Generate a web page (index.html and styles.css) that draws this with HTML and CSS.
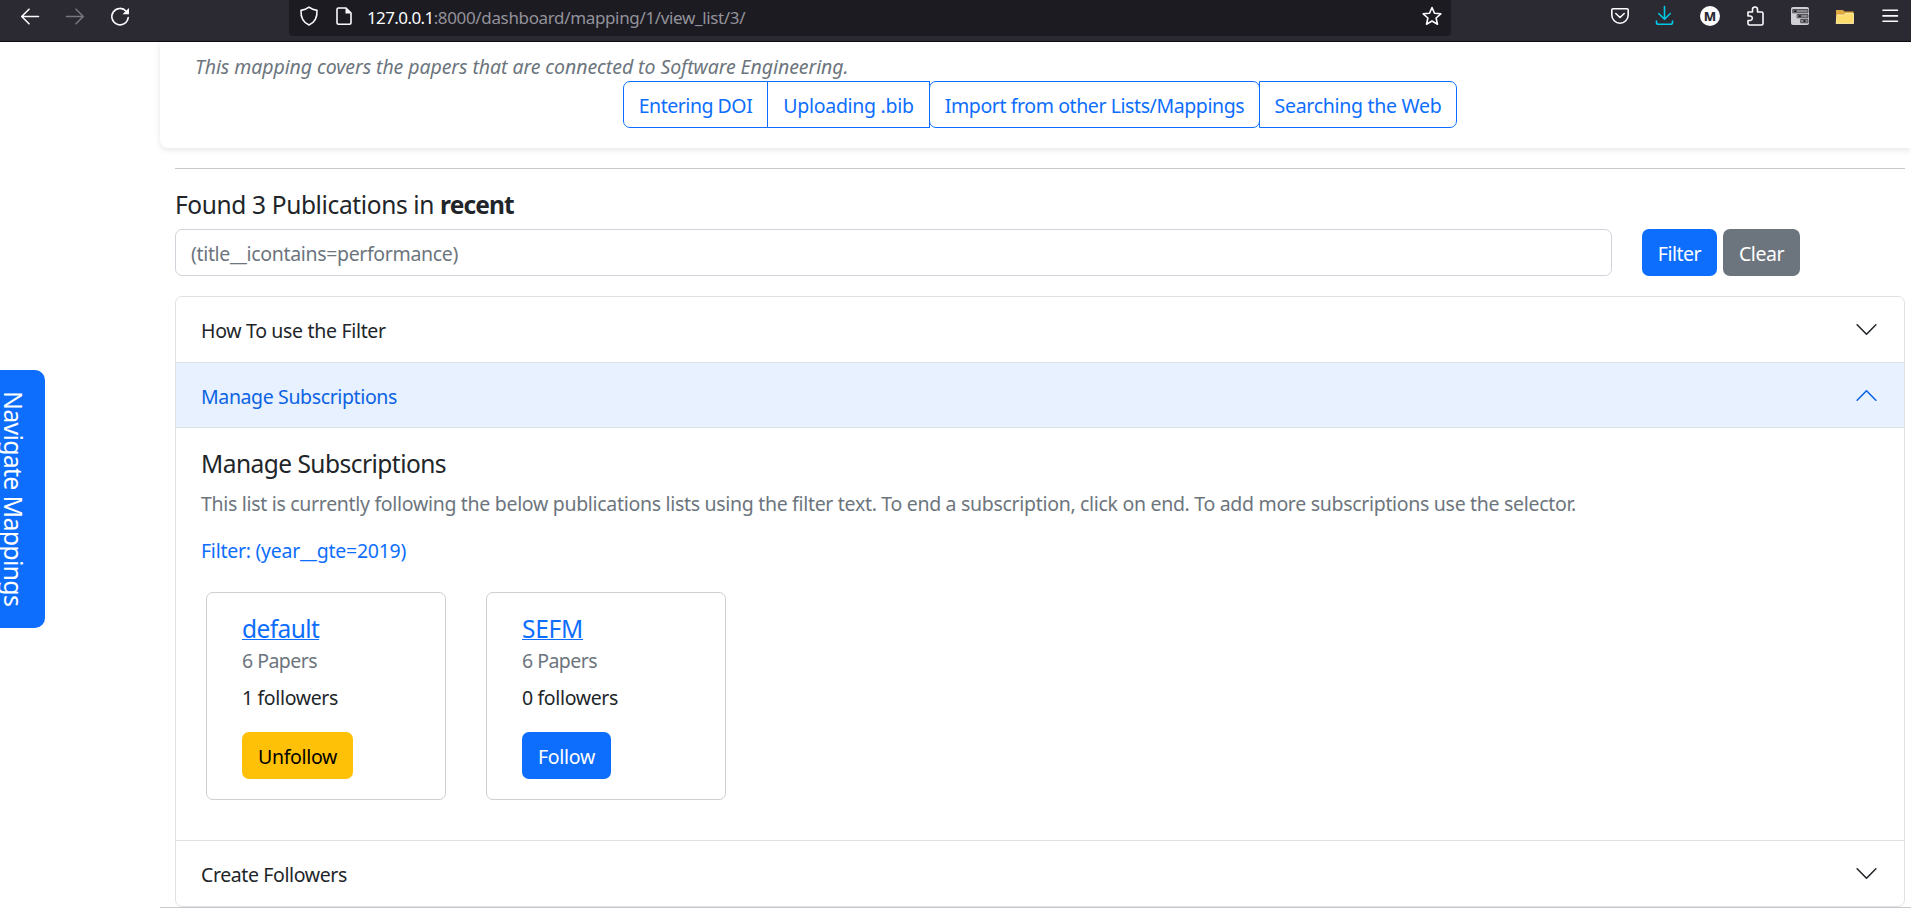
FILE: index.html
```html
<!DOCTYPE html>
<html lang="en">
<head>
<meta charset="utf-8">
<title>Mapping list</title>
<link rel="stylesheet" href="styles.css">
</head>
<body>
<header class="toolbar">
  <nav class="tools">
    <svg class="icon" viewBox="0 0 20 20"><path d="M18.500 10.500H2M9 3.200L1.700 10.500L9 17.800"/></svg>
    <svg class="icon dim" viewBox="0 0 20 20"><path d="M1.500 10.500H18M11 3.200L18.300 10.500L11 17.800"/></svg>
    <svg class="icon" viewBox="0 0 20 20"><path d="M16.200 5.200A8.200 8.200 0 1 0 18.200 11.500"/><path class="solid" d="M19 2V8.300H12.500Z"/></svg>
  </nav>
  <div class="url">
    <svg class="icon" viewBox="0 0 20 20"><path d="M10 1.200C12.300 3 15 4 18 4.400C18.300 11 16 16.500 10 19C4 16.500 1.700 11 2 4.400C5 4 7.700 3 10 1.200Z"/></svg>
    <svg class="icon" viewBox="0 0 20 20"><path d="M4.500 2H12L17 7V16.500Q17 18.200 15.300 18.200H4.700Q3 18.200 3 16.500V3.500Q3 2 4.500 2Z"/><path class="solid" d="M11.500 2L17 7.500H11.500Z"/></svg>
    <p class="address"><span class="host">127.0.0.1</span>:8000/dashboard/mapping/1/view_list/3/</p>
    <svg class="icon" viewBox="0 0 20 20"><path d="M10 1.500L12.500 7.200L18.800 7.800L14.100 12L15.500 18.200L10 15L4.500 18.200L5.900 12L1.200 7.800L7.500 7.200Z"/></svg>
  </div>
  <div class="tools extras">
    <svg class="icon" viewBox="0 0 20 20"><path d="M3 2.800H17Q18.200 2.800 18.200 4V9A8.200 8.200 0 0 1 1.800 9V4Q1.800 2.800 3 2.800Z"/><path d="M5.800 7.500L10 11.500L14.200 7.500"/></svg>
    <svg class="icon cyan" viewBox="0 0 20 20"><path d="M9.500 0.500V13M3.700 7.500L9.500 13.300L15.300 7.500"/><path d="M1.500 15V16.500Q1.500 18.300 3.500 18.300H15.500Q17.500 18.300 17.500 16.500V15"/></svg>
    <svg class="icon" viewBox="0 0 20 20"><circle class="disc" cx="10" cy="10" r="10"/><text class="letter" x="10" y="14.700">M</text></svg>
    <svg class="icon" viewBox="0 0 20 20"><path d="M3 6H7.500V3.500A2.500 2.500 0 0 1 12.500 3.500V6H16.500Q18 6 18 7.500V17.500Q18 19 16.500 19H4.500Q3 19 3 17.500V14.500H5.500A2.300 2.300 0 0 0 5.500 10H3Z"/></svg>
    <svg class="icon" viewBox="0 0 20 20"><rect class="pane" x="1" y="1" width="18" height="18" rx="2"/><path class="rows" d="M3 3.500H18V6.800H3ZM7.500 8.500H18V11.800H7.500ZM11 13.500H18V16.800H11Z"/><path class="marks" d="M4.500 5.100H6M9 10.100H10.500M14 15.100H15"/></svg>
    <svg class="icon" viewBox="0 0 20 20"><path class="folder-back" d="M1 4H8L9.500 5.500H18.500V17.500H1Z"/><path class="folder-front" d="M2.500 9H8.500L10.500 7.500H18.500V17.500H1.500Z"/></svg>
    <svg class="icon" viewBox="0 0 20 20"><path d="M3 4.200H17.500M3 9.900H17.500M3 15.300H17.500"/></svg>
  </div>
</header>

<main class="page">
  <section class="intro">
    <p class="summary">This mapping covers the papers that are connected to Software Engineering.</p>
    <div class="actions">
      <button class="btn outline first w-doi">Entering DOI</button>
      <button class="btn outline square w-bib">Uploading .bib</button>
      <button class="btn outline w-import">Import from other Lists/Mappings</button>
      <button class="btn outline last w-web">Searching the Web</button>
    </div>
  </section>

  <div class="content">
    <h5 class="title found">Found 3 Publications in <b>recent</b></h5>
    <form class="filter">
      <div class="field">(title__icontains=performance)</div>
      <button type="button" class="btn primary w-filter">Filter</button>
      <button type="button" class="btn secondary w-clear">Clear</button>
    </form>

    <div class="accordion">
      <div class="head">How To use the Filter<svg class="chevron" viewBox="0 0 16 16"><path d="M2 5L8 11L14 5"/></svg></div>
      <div class="head open">Manage Subscriptions<svg class="chevron" viewBox="0 0 16 16"><path d="M2 11L8 5L14 11"/></svg></div>
      <div class="body">
        <h5 class="title manage">Manage Subscriptions</h5>
        <p class="hint">This list is currently following the below publications lists using the filter text. To end a subscription, click on end. To add more subscriptions use the selector.</p>
        <p class="query">Filter: (year__gte=2019)</p>
        <div class="cards">
          <article class="card">
            <a class="name default">default</a>
            <p class="papers">6 Papers</p>
            <p class="followers">1 followers</p>
            <button class="btn warning w-unfollow">Unfollow</button>
          </article>
          <article class="card">
            <a class="name">SEFM</a>
            <p class="papers">6 Papers</p>
            <p class="followers">0 followers</p>
            <button class="btn primary w-follow">Follow</button>
          </article>
        </div>
      </div>
      <div class="head create">Create Followers<svg class="chevron" viewBox="0 0 16 16"><path d="M2 5L8 11L14 5"/></svg></div>
    </div>
  </div>
  <hr class="end">
</main>
<aside class="side-tab"><span>Navigate Mappings</span></aside>
</body>
</html>
```
FILE: styles.css
```css
* { box-sizing: border-box; }
body { margin: 0; height: 913px; overflow: hidden; background: #fff; color: #212529; font: 19.5px/30px "Noto Sans", "Open Sans", sans-serif; }
p, h5 { margin: 0; font-weight: 400; white-space: nowrap; }
.toolbar { display: flex; height: 42px; background: #2b2a33; border-bottom: 1px solid #0c0c0d; }
.tools { display: flex; gap: 25px; padding: 6px 0 0 20px; }
.icon { display: block; flex: none; width: 20px; height: 20px; overflow: visible; fill: none; stroke: #fbfbfe; stroke-width: 1.6; stroke-linejoin: round; stroke-linecap: round; }
.dim { stroke: #77767c; }
.cyan { stroke: #00c8e6; }
.solid { fill: #fbfbfe; stroke: none; }
.disc { fill: #fbfbfe; stroke: none; }
.letter { fill: #2b2a33; stroke: none; font-size: 13px; font-weight: 800; text-anchor: middle; }
.pane { fill: #d0d0d4; stroke: none; }
.rows { fill: #85858b; stroke: #3c3c42; stroke-width: .8; }
.marks { stroke: #1c1b22; stroke-width: 1.6; }
.folder-back { fill: #e0a840; stroke: none; }
.folder-front { fill: #fbdc6c; stroke: #fff0b8; stroke-width: .8; }
.url { display: flex; width: 1162px; height: 36px; margin-left: 159px; padding: 6px 9px 0 10px; gap: 15px; background: #1c1b22; border-radius: 0 0 4px 4px; }
.address { flex: 1; margin-left: -2px; font-size: 17px; line-height: 24px; letter-spacing: -.35px; color: #93929a; }
.host { color: #fbfbfe; letter-spacing: -.6px; }
.extras { padding-left: 159px; }
.page { margin-left: 160px; }
.intro { height: 106px; padding: 10px 0 0 36px; border-radius: 0 0 0 8px; box-shadow: 0 2px 6px rgba(0,0,0,.1); }
.summary { height: 29px; margin-left: -1px; font-style: italic; letter-spacing: -.075px; color: #6c757d; }
.actions { display: flex; margin-left: 427px; }
.btn { height: 47px; padding: 2px 0 0; border: 1px solid transparent; border-radius: 7px; font: inherit; letter-spacing: inherit; white-space: nowrap; color: #fff; text-align: center; }
.outline { background: #fff; color: #0d6efd; border-color: #0d6efd; }
.outline + .outline { margin-left: -1px; }
.first { border-radius: 7px 0 0 7px; }
.square { border-radius: 0; }
.last { border-radius: 0 7px 7px 0; }
.primary { background: #0d6efd; }
.secondary { background: #6c757d; }
.warning { background: #ffc107; color: #000; }
.w-doi { width: 145px; letter-spacing: -.47px; }
.w-bib { width: 163px; letter-spacing: -.29px; }
.w-import { width: 331px; letter-spacing: -.41px; }
.w-web { width: 198px; letter-spacing: -.28px; }
.w-filter { width: 75px; letter-spacing: -.5px; }
.w-clear { width: 77px; margin-left: 6px; letter-spacing: -.46px; }
.w-unfollow { width: 111px; letter-spacing: -.32px; }
.w-follow { width: 89px; letter-spacing: -.28px; }
.content { margin: 20px 6px 0 15px; border-top: 1px solid #c7c8c9; }
.title { font-size: 24.5px; line-height: 30px; }
.found { padding-top: 21px; letter-spacing: -.37px; }
.found b { letter-spacing: -.85px; }
.manage { letter-spacing: -.53px; }
.filter { display: flex; margin-top: 9px; }
.field { width: 1437px; height: 47px; margin-right: 30px; padding: 9px 15px 0; border: 1px solid #ced4da; border-radius: 7px; letter-spacing: -.34px; color: #6c757d; }
.accordion { margin-top: 20px; border: 1px solid #dee2e6; border-radius: 7px; overflow: hidden; }
.head { display: flex; justify-content: space-between; height: 65px; padding: 19px 25px 0; letter-spacing: -.32px; }
.open { height: 66px; background: #e7f1ff; color: #0c63e4; border: solid #dee2e6; border-width: 1px 0; letter-spacing: -.375px; }
.create { letter-spacing: -.39px; }
.chevron { width: 25px; height: 25px; margin-top: 1px; fill: none; stroke: currentColor; stroke-linecap: round; stroke-linejoin: round; }
.body { height: 413px; padding: 21px 25px 0; border-bottom: 1px solid #dee2e6; }
.hint { margin-top: 10px; letter-spacing: -.308px; color: #6c757d; }
.query { margin-top: 17px; letter-spacing: -.26px; color: #0d6efd; }
.cards { display: flex; gap: 40px; margin: 26px 0 0 5px; }
.card { width: 240px; height: 208px; padding: 21px 35px; border: 1px solid #cfcfcf; border-radius: 7px; }
.name { display: block; width: fit-content; font-size: 24.5px; line-height: 30px; letter-spacing: -.25px; color: #0d6efd; text-decoration: underline; text-decoration-thickness: 1px; }
.default { letter-spacing: -.6px; }
.papers { margin-top: 2px; letter-spacing: -.54px; color: #6c757d; }
.followers { margin: 7px 0 19px; letter-spacing: -.36px; }
.end { margin: 0; border: 0; border-top: 1px solid #c7c8c9; }
.side-tab { position: absolute; left: 0; top: 370px; width: 45px; height: 258px; overflow: hidden; border-radius: 0 10px 10px 0; background: #0d6efd; color: #fff; }
.side-tab span { position: absolute; left: -4px; top: 21px; writing-mode: vertical-rl; font-size: 25px; line-height: 36px; letter-spacing: -.75px; white-space: nowrap; }
```
